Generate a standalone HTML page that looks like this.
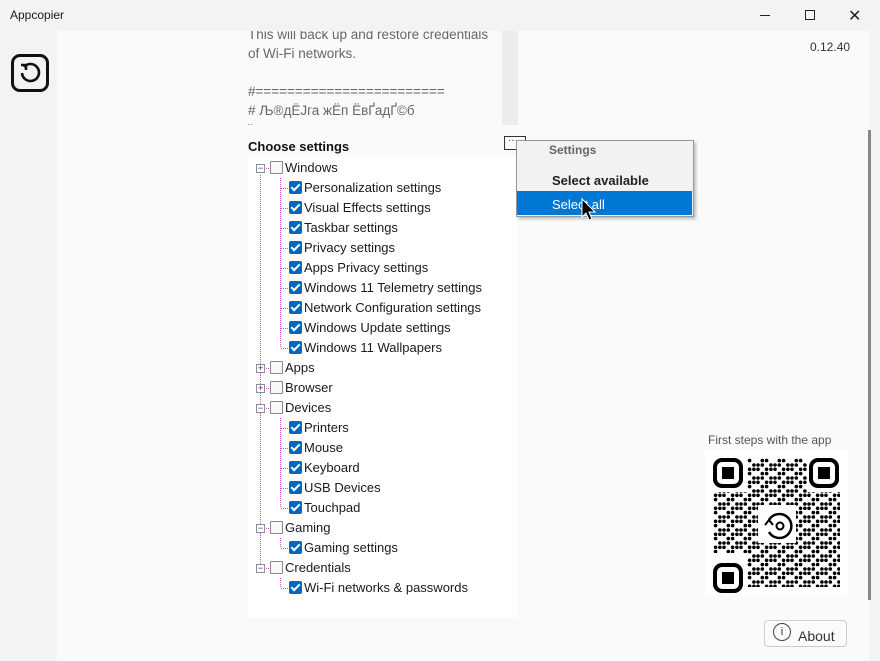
<!DOCTYPE html>
<html><head><meta charset="utf-8"><style>
*{margin:0;padding:0;box-sizing:border-box}
body{width:880px;height:661px;overflow:hidden;background:#f3f3f3;font-family:"Liberation Sans","DejaVu Sans",sans-serif;position:relative;color:#1a1a1a}
.a{position:absolute}
.t{font-size:13px;white-space:nowrap}
.cb{position:absolute;width:13px;height:13px;border:1px solid #8a8a8a;background:#f8f8f8;border-radius:1px}
.ck{position:absolute;width:13px;height:13px;background:#0067c0;border-radius:2px}
.ck:after{content:"";position:absolute;left:4px;top:1px;width:3px;height:7px;border:solid #fff;border-width:0 2px 2px 0;transform:rotate(45deg)}
.ex{position:absolute;width:9px;height:9px;border:1px solid #8a8aa0;background:#fff;font-size:9px;line-height:6px;text-align:center;color:#333}
.vl{position:absolute;width:1px;background:repeating-linear-gradient(#d050d0 0 1px,transparent 1px 2px)}
.hl{position:absolute;height:1px;background:repeating-linear-gradient(90deg,#d050d0 0 1px,transparent 1px 2px)}
</style></head><body>
<div class="a" style="left:0;top:0;width:880px;height:31px;background:#f3f3f3"></div>
<div class="a t" style="left:10px;top:8px;font-size:12px">Appcopier</div>
<div class="a" style="left:760px;top:15px;width:10px;border-top:1px solid #222"></div>
<div class="a" style="left:805px;top:10px;width:10px;height:10px;border:1px solid #222"></div>
<div class="a" style="left:848px;top:6px;font-size:16px;color:#222">✕</div>
<div class="a" style="left:57px;top:31px;width:813px;height:630px;background:#fafafa"></div>
<div class="a" style="left:11px;top:54px;width:38px;height:38px;border:3px solid #111;border-radius:9px"></div>
<svg class="a" style="left:17px;top:60px" width="26" height="26" viewBox="0 0 26 26"><path d="M7 7 A8.5 8.5 0 1 1 5 13" fill="none" stroke="#111" stroke-width="2.6"/><path d="M4 5 L9 5 L9 10" fill="none" stroke="#111" stroke-width="2.6"/></svg>
<div class="a" style="left:248px;top:31px;width:254px;height:94px;overflow:hidden;color:#666;font-size:13.5px;line-height:19px">
<div style="margin-top:-6px">This will back up and restore credentials<br>of Wi-Fi networks.<br><br>#========================<br># Љ®дЁЈга жЁп ЁвҐадҐ©б<br>¨</div></div>
<div class="a" style="left:502px;top:31px;width:16px;height:94px;background:#ececec"></div>
<div class="a" style="left:810px;top:40px;font-size:12px;color:#333">0.12.40</div>
<div class="a t" style="left:248px;top:139px;font-weight:bold;font-size:13px;color:#111">Choose settings</div>
<div class="a" style="left:504px;top:136px;width:22px;height:14px;border:1px solid #333;font-size:10px;line-height:8px;padding-left:3px">··</div>
<div class="a" style="left:248px;top:157px;width:269px;height:461px;background:#fff"></div>
<div class="vl" style="left:260px;top:175px;height:393px"></div>
<div class="vl" style="left:280px;top:178px;height:170px"></div>
<div class="vl" style="left:280px;top:418px;height:90px"></div>
<div class="vl" style="left:280px;top:538px;height:10px"></div>
<div class="vl" style="left:280px;top:578px;height:10px"></div>
<div id="tree"></div>
<div class="a" style="left:516px;top:140px;width:178px;height:77px;background:#f2f2f2;border:1px solid #999;box-shadow:2px 2px 3px rgba(0,0,0,.25)"></div>
<div class="a t" style="left:549px;top:143px;font-size:12px;color:#666;font-weight:bold">Settings</div>
<div class="a t" style="left:552px;top:173px;color:#222;font-weight:bold">Select available</div>
<div class="a" style="left:517px;top:191px;width:175px;height:24px;background:#0078d4"></div>
<div class="a t" style="left:552px;top:197px;color:#fff">Select all</div>
<svg class="a" style="left:580px;top:198px" width="18" height="24"><path d="M2 1 L2 19 L6 15 L9 22 L12 21 L9 14 L15 14 Z" fill="#000" stroke="#fff" stroke-width="1"/></svg>
<div class="a" style="left:868px;top:130px;width:3px;height:470px;background:#888"></div>
<div class="a t" style="left:708px;top:433px;font-size:12px;color:#555">First steps with the app</div>
<svg class="a" style="left:705px;top:450px" width="143" height="145" viewBox="0 0 143 145">
<defs><pattern id="p" width="17" height="13" patternUnits="userSpaceOnUse">
<circle cx="2" cy="2" r="1.8"/><circle cx="6.3" cy="2" r="1.8"/><circle cx="14.9" cy="2" r="1.8"/><circle cx="2" cy="6.3" r="1.8"/><circle cx="10.6" cy="6.3" r="1.8"/><circle cx="14.9" cy="6.3" r="1.8"/><circle cx="6.3" cy="10.6" r="1.8"/><circle cx="10.6" cy="10.6" r="1.8"/></pattern></defs>
<rect width="143" height="145" fill="#fff"/>
<rect x="8" y="8" width="127" height="129" fill="url(#p)"/>
<g fill="#fff"><rect x="6" y="6" width="36" height="36"/><rect x="102" y="6" width="36" height="36"/><rect x="6" y="103" width="36" height="36"/><rect x="53" y="55" width="38" height="38"/></g>
<g fill="none" stroke="#000" stroke-width="4"><rect x="10" y="10" width="26" height="26" rx="7"/><rect x="106" y="10" width="26" height="26" rx="7"/><rect x="10" y="115" width="26" height="26" rx="7"/></g>
<g fill="#000"><rect x="17" y="17" width="12" height="12"/><rect x="113" y="17" width="12" height="12"/><rect x="17" y="122" width="12" height="12"/></g>
<path d="M64 70 A12 12 0 1 1 64 82" fill="none" stroke="#000" stroke-width="2.5"/><path d="M60 75 L64 70 L68 75" fill="none" stroke="#000" stroke-width="2"/><circle cx="75" cy="76" r="3.5" fill="none" stroke="#000" stroke-width="2"/>
</svg>
<div class="a" style="left:764px;top:620px;width:83px;height:27px;border:1px solid #ccc;border-radius:4px;background:#fbfbfb"></div>
<div class="a" style="left:773px;top:623px;width:18px;height:18px;border:1px solid #444;border-radius:50%;font-size:11px;text-align:center;line-height:16px;color:#333">i</div>
<div class="a t" style="left:798px;top:628px;font-size:14px;color:#333">About</div>
<script>
var rows=[[0,"Windows","e-"],[1,"Personalization settings"],[1,"Visual Effects settings"],[1,"Taskbar settings"],[1,"Privacy settings"],[1,"Apps Privacy settings"],[1,"Windows 11 Telemetry settings"],[1,"Network Configuration settings"],[1,"Windows Update settings"],[1,"Windows 11 Wallpapers"],[0,"Apps","+"],[0,"Browser","+"],[0,"Devices","-"],[1,"Printers"],[1,"Mouse"],[1,"Keyboard"],[1,"USB Devices"],[1,"Touchpad"],[0,"Gaming","-"],[1,"Gaming settings"],[0,"Credentials","-"],[1,"Wi-Fi networks & passwords"]];
var h="";rows.forEach(function(r,i){var y=168+i*20;
if(r[0]==0){h+='<div class="ex" style="left:256px;top:'+(y-4)+'px">'+(r[2]=="+"?"+":"−")+'</div><div class="hl" style="left:266px;top:'+y+'px;width:4px"></div><div class="cb" style="left:270px;top:'+(y-7)+'px"></div><div class="a t" style="left:285px;top:'+(y-8)+'px">'+r[1]+'</div>';}
else{h+='<div class="hl" style="left:281px;top:'+y+'px;width:8px"></div><div class="ck" style="left:289px;top:'+(y-7)+'px"></div><div class="a t" style="left:304px;top:'+(y-8)+'px">'+r[1].replace("&","&amp;")+'</div>';}});
document.getElementById("tree").innerHTML=h;
</script>
</body></html>
